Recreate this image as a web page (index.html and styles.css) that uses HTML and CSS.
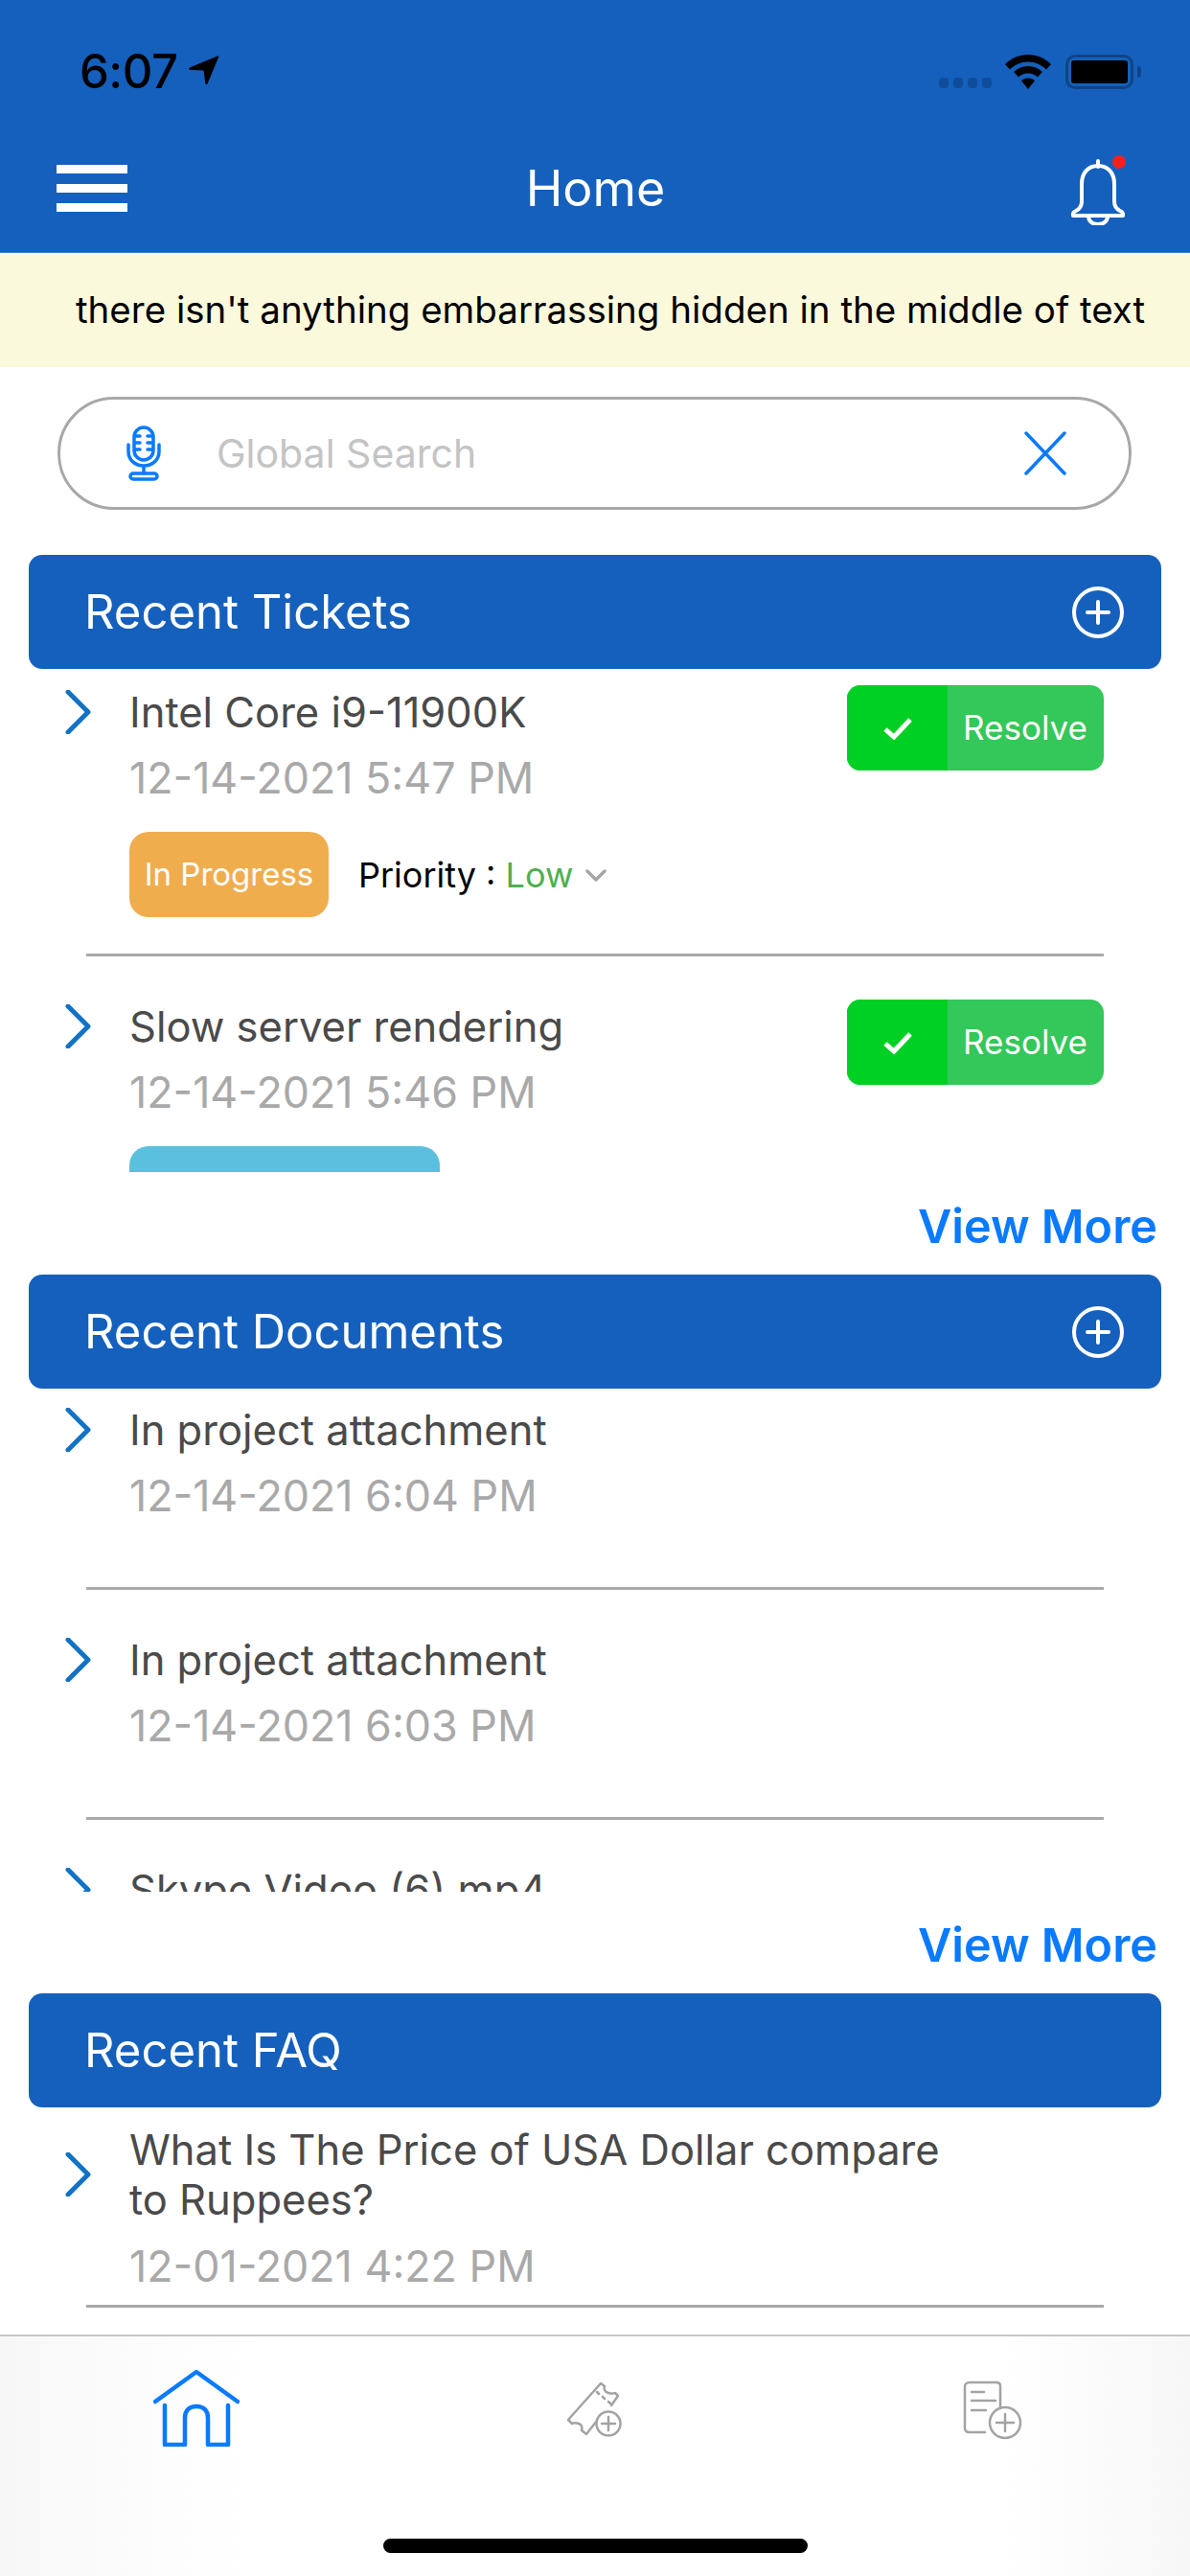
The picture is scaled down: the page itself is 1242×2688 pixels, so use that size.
FILE: index.html
```html
<!DOCTYPE html>
<html lang="en">
<head>
<meta charset="utf-8">
<title>Home</title>
<link rel="stylesheet" href="styles.css">
</head>
<body>
<div class="app">
  <header class="header">
    <div class="status">
      <div class="status-left">
        <span class="time">6:07</span>
        <svg class="arrow" viewBox="0 0 32 32"><path d="M1 13.500 30 1.500c1-.4 1.500.2 1.100 1.200L19.500 30.500c-.5 1.200-2 1-2.200-.3L15.500 16.500 1.500 16c-1.500-.1-1.800-1.800-.5-2.500z" fill="#000"/></svg>
      </div>
      <div class="status-right">
        <div class="dots"><i></i><i></i><i></i><i></i></div>
        <svg class="wifi" viewBox="0 0 48 36"><path d="M24 0C15 0 6.500 3.500 0 10l5 5.500C10 10.500 16.800 7.500 24 7.500s14 3 19 8l5-5.500C41.500 3.500 33 0 24 0z" fill="#000"/><path d="M24 12c-5.800 0-11 2.300-15 6l5 5.500c2.600-2.500 6.200-4 10-4s7.400 1.500 10 4l5-5.500c-4-3.700-9.200-6-15-6z" fill="#000"/><path d="M24 24.500c-2.700 0-5.200 1-7 2.700L24 36l7-8.800c-1.800-1.700-4.300-2.700-7-2.700z" fill="#000"/></svg>
        <div class="battery"><div class="battery-fill"></div></div>
        <div class="battery-nub"></div>
      </div>
    </div>
    <nav class="nav">
      <div class="burger"><i></i><i></i><i></i></div>
      <div class="nav-title">Home</div>
      <svg class="bell" viewBox="0 0 58 73"><path d="M29 6v6M29 11c-11 0-17 8-17 19v18c0 5-2 8-6 10-2 1-3 2-3 3v2h52v-2c0-1-1-2-3-3-4-2-6-5-6-10V30c0-11-6-19-17-19z" fill="none" stroke="#fff" stroke-width="4" stroke-linejoin="round" stroke-linecap="round"/><path d="M19 63c0 6 4 9 10 9s10-3 10-9" fill="none" stroke="#fff" stroke-width="4"/><circle cx="51" cy="7" r="7" fill="#f5201e"/></svg>
    </nav>
  </header>

  <div class="notice">there isn't anything embarrassing hidden in the middle of text</div>

  <div class="search">
    <svg class="mic" viewBox="0 0 36 58"><g fill="none" stroke="#0a7aff" stroke-width="3.500" stroke-linecap="round" stroke-linejoin="round"><rect x="8" y="2" width="20" height="34" rx="10"/><path d="M9 11h5M22 11h5M9 18h5M22 18h5M9 25h5M22 25h5"/><path d="M2 20v7c0 9 7 15 16 15s16-6 16-15v-7M18 42v8"/><rect x="4" y="50" width="28" height="6" rx="3"/></g></svg>
    <span class="placeholder">Global Search</span>
    <svg class="clear" viewBox="0 0 44 46"><path d="M2 2l40 42M42 2L2 44" fill="none" stroke="#0a7aff" stroke-width="3.500" stroke-linecap="round"/></svg>
  </div>

  <section class="bar">
    <h2 class="bar-title">Recent Tickets</h2>
    <svg class="plus" viewBox="0 0 54 54"><circle cx="27" cy="27" r="25" fill="none" stroke="#fff" stroke-width="4"/><path d="M16 27h22M27 16v22" stroke="#fff" stroke-width="4" stroke-linecap="round"/></svg>
  </section>
  <div class="list list-clip">
    <article class="item item-ticket">
      <svg class="chev" viewBox="0 0 28 46"><path d="M3 2l21 21L3 44" fill="none" stroke="#1272c4" stroke-width="5" stroke-linecap="round" stroke-linejoin="round"/></svg>
      <div class="body">
        <div class="title">Intel Core i9-11900K</div>
        <div class="date">12-14-2021 5:47 PM</div>
        <div class="meta">
          <span class="badge badge-orange">In Progress</span>
          <span class="priority">Priority : <span class="low">Low</span></span>
          <svg class="down" viewBox="0 0 22 14"><path d="M2 2l9 9 9-9" fill="none" stroke="#a6a6a6" stroke-width="3.500" stroke-linecap="round" stroke-linejoin="round"/></svg>
        </div>
      </div>
      <div class="resolve">
        <span class="resolve-icon"><svg class="check" viewBox="0 0 32 24"><path d="M3 13l9 8L29 3" fill="none" stroke="#fff" stroke-width="5"/></svg></span>
        <span class="resolve-text">Resolve</span>
      </div>
    </article>
    <article class="item item-ticket">
      <svg class="chev" viewBox="0 0 28 46"><path d="M3 2l21 21L3 44" fill="none" stroke="#1272c4" stroke-width="5" stroke-linecap="round" stroke-linejoin="round"/></svg>
      <div class="body">
        <div class="title">Slow server rendering</div>
        <div class="date">12-14-2021 5:46 PM</div>
        <div class="meta"><span class="badge badge-blue"></span></div>
      </div>
      <div class="resolve">
        <span class="resolve-icon"><svg class="check" viewBox="0 0 32 24"><path d="M3 13l9 8L29 3" fill="none" stroke="#fff" stroke-width="5"/></svg></span>
        <span class="resolve-text">Resolve</span>
      </div>
    </article>
  </div>
  <div class="more">View More</div>

  <section class="bar">
    <h2 class="bar-title">Recent Documents</h2>
    <svg class="plus" viewBox="0 0 54 54"><circle cx="27" cy="27" r="25" fill="none" stroke="#fff" stroke-width="4"/><path d="M16 27h22M27 16v22" stroke="#fff" stroke-width="4" stroke-linecap="round"/></svg>
  </section>
  <div class="list list-clip list-docs">
    <article class="item item-doc">
      <svg class="chev" viewBox="0 0 28 46"><path d="M3 2l21 21L3 44" fill="none" stroke="#1272c4" stroke-width="5" stroke-linecap="round" stroke-linejoin="round"/></svg>
      <div class="body">
        <div class="title">In project attachment</div>
        <div class="date">12-14-2021 6:04 PM</div>
      </div>
    </article>
    <article class="item item-doc">
      <svg class="chev" viewBox="0 0 28 46"><path d="M3 2l21 21L3 44" fill="none" stroke="#1272c4" stroke-width="5" stroke-linecap="round" stroke-linejoin="round"/></svg>
      <div class="body">
        <div class="title">In project attachment</div>
        <div class="date">12-14-2021 6:03 PM</div>
      </div>
    </article>
    <article class="item item-doc">
      <svg class="chev" viewBox="0 0 28 46"><path d="M3 2l21 21L3 44" fill="none" stroke="#1272c4" stroke-width="5" stroke-linecap="round" stroke-linejoin="round"/></svg>
      <div class="body">
        <div class="title">Skype Video (6).mp4</div>
      </div>
    </article>
  </div>
  <div class="more more-last">View More</div>

  <section class="bar">
    <h2 class="bar-title">Recent FAQ</h2>
  </section>
  <div class="list list-docs">
    <article class="item item-faq">
      <svg class="chev chev-faq" viewBox="0 0 28 46"><path d="M3 2l21 21L3 44" fill="none" stroke="#1272c4" stroke-width="5" stroke-linecap="round" stroke-linejoin="round"/></svg>
      <div class="body">
        <div class="title title-wrap">What Is The Price of USA Dollar compare to Ruppees?</div>
        <div class="date">12-01-2021 4:22 PM</div>
      </div>
    </article>
  </div>

  <footer class="tabbar">
    <div class="tabs">
      <svg class="tab-home" viewBox="0 0 90 80"><g fill="none" stroke="#0a7aff" stroke-width="4.500" stroke-linecap="round" stroke-linejoin="round"><path d="M2 33L45 2l43 31"/><path d="M12 37v41h21V50c0-8 5-12 12-12s12 4 12 12v28h21V37"/></g></svg>
      <svg class="tab-ticket" viewBox="0 0 58 58"><g fill="none" stroke="#a3a3a3" stroke-width="2.500" stroke-linecap="round" stroke-linejoin="round"><path d="M35 2l4 3c-1 3 0 6 4 7s5 1 7 0l3 3-7 10M31 41L20 55l-5-4c1-3 0-6-3-7s-5-1-7 0l-4-4L35 2"/><path d="M31 11l2 2M37 16l2 2M43 21l2 2"/><circle cx="43" cy="44" r="12.500"/><path d="M36 44h14M43 37v14"/></g></svg>
      <svg class="tab-doc" viewBox="0 0 62 62"><g fill="none" stroke="#a3a3a3" stroke-width="2.500" stroke-linecap="round" stroke-linejoin="round"><path d="M39 29V6c0-3-2-4-4-4H7C4 2 2 4 2 6v44c0 3 2 4 5 4h16"/><path d="M9 12h13M9 21h25M9 31h15"/><circle cx="44" cy="44" r="16"/><path d="M35 44h18M44 35v18"/></g></svg>
    </div>
    <div class="home-indicator"></div>
  </footer>
</div>
</body>
</html>
```
FILE: styles.css
```css
* { box-sizing: border-box; }
html, body { margin: 0; padding: 0; background: #fff; }
.app {
  width: 1242px;
  height: 2688px;
  display: flex;
  flex-direction: column;
  overflow: hidden;
  font-family: Inter, "Liberation Sans", sans-serif;
  background: #fff;
}
.header {
  height: 264px;
  flex: none;
  background: #1560bd;
  padding-top: 50px;
  border-bottom: 1px solid #3d7fd0;
}
.status {
  height: 50px;
  display: flex;
  justify-content: space-between;
  align-items: center;
  padding: 0 51px 0 83px;
}
.status-left { display: flex; align-items: center; gap: 12px; }
.time { font-size: 49px; font-weight: 500; color: #000; line-height: 50px; letter-spacing: -0.5px; }
.arrow { width: 32px; height: 32px; margin-top: -5px; display: block; }
.status-right { display: flex; align-items: center; }
.dots { display: flex; gap: 5px; margin: 23px 14px 0 0; }
.dots i { width: 10px; height: 11px; border-radius: 4px; background: #0f4c99; display: block; }
.wifi { width: 48px; height: 36px; display: block; margin-right: 15px; }
.battery {
  width: 71px;
  height: 36px;
  border: 3px solid #0f4485;
  border-radius: 10px;
  padding: 3px;
}
.battery-fill { width: 100%; height: 100%; background: #000; border-radius: 3px; }
.battery-nub { width: 4px; height: 12px; background: #0f4485; border-radius: 0 4px 4px 0; margin-left: 4px; }
.nav {
  height: 163px;
  padding: 30px 67px 0 59px;
  display: grid;
  grid-template-columns: 1fr auto 1fr;
  align-items: center;
}
.burger { width: 74px; display: flex; flex-direction: column; gap: 11px; margin-top: -1px; }
.burger i { display: block; height: 9px; background: #fff; }
.nav-title { font-size: 52px; color: #fff; font-weight: 400; line-height: 60px; margin-left: 9px; }
.bell { width: 58px; height: 73px; display: block; margin-top: 3px; justify-self: end; }
.notice {
  height: 119px;
  flex: none;
  background: #faf9dc;
  color: #000;
  font-size: 38.500px;
  line-height: 119px;
  padding-left: 79px;
  white-space: nowrap;
}
.search {
  flex: none;
  height: 118px;
  margin: 31px 61px 47px 60px;
  border: 3px solid #a8a8a8;
  border-radius: 59px;
  display: flex;
  align-items: center;
  padding: 0 65px 0 69px;
}
.mic { width: 36px; height: 58px; display: block; flex: none; }
.placeholder { font-size: 41px; color: #c4c4c4; margin-left: 58px; flex: 1; }
.clear { width: 44px; height: 46px; display: block; flex: none; }
.bar {
  flex: none;
  height: 119px;
  margin: 0 30px;
  background: #1560bd;
  border-radius: 14px;
  display: flex;
  align-items: center;
  justify-content: space-between;
  padding: 0 39px 0 58px;
}
.bar-title { margin: 0; font-size: 49px; font-weight: 400; color: #fff; line-height: 60px; }
.plus { width: 54px; height: 54px; display: block; }
.list { padding: 20px 0 0 68px; flex: none; }
.list-docs { padding-top: 18px; }
.list-clip { height: 525px; overflow: hidden; }
.item {
  display: flex;
  width: 1084px;
  margin-bottom: 48px;
  position: relative;
}
.item-ticket { padding-bottom: 41px; }
.item-doc { padding-bottom: 73px; }
.item-faq { padding-bottom: 18px; margin-bottom: 0; }
.item::after {
  content: "";
  position: absolute;
  left: 22px;
  right: 0;
  bottom: 0;
  height: 3px;
  background: #a9a9a9;
}
.chev { width: 28px; height: 46px; flex: none; margin: 2px 39px 0 0; display: block; }
.chev-faq { margin-top: 29px; }
.body { flex: 1; min-width: 0; }
.title { font-size: 43.500px; color: #4a4a4a; line-height: 50px; }
.title-wrap { max-width: 880px; line-height: 52px; }
.date { font-size: 44.800px; color: #a9a9a9; line-height: 50px; margin-top: 19px; }
.meta { display: flex; align-items: center; margin-top: 31px; height: 89px; }
.badge {
  height: 89px;
  border-radius: 20px;
  color: #fff;
  font-size: 33px;
  line-height: 89px;
  text-align: center;
  flex: none;
}
.badge-orange { width: 208px; background: #f0ad4e; }
.badge-blue { width: 324px; background: #5bc0de; }
.priority { font-size: 36px; color: #000; margin-left: 31px; }
.low { color: #4caf50; }
.down { width: 22px; height: 14px; margin: 2px 0 0 13px; display: block; }
.resolve {
  flex: none;
  width: 268px;
  height: 89px;
  margin-top: -3px;
  border-radius: 14px;
  overflow: hidden;
  display: flex;
  background: #34c759;
}
.resolve-icon {
  width: 105px;
  background: #00d024;
  display: flex;
  align-items: center;
  justify-content: center;
}
.check { width: 32px; height: 24px; display: block; }
.resolve-text { color: #fff; font-size: 35px; line-height: 89px; margin-left: 16px; }
.more {
  flex: none;
  height: 107px;
  text-align: right;
  padding: 32px 34px 0 0;
  font-size: 48.500px;
  line-height: 50px;
  font-weight: 600;
  color: #0a7aff;
}
.more-last { height: 106px; padding-top: 31px; }
.tabbar {
  margin-top: auto;
  flex: none;
  height: 252px;
  border-top: 2px solid #c6c6c6;
  background: linear-gradient(90deg, #f7f7f7 0, #fdfdfd 14%, #fff 22%, #fff 84%, #f7f7f7 100%);
  position: relative;
}
.tabs {
  display: flex;
  align-items: flex-start;
  padding-left: 160px;
}
.tab-home { width: 90px; height: 80px; margin-top: 35px; display: block; }
.tab-ticket { width: 58px; height: 58px; margin: 47px 0 0 342px; display: block; }
.tab-doc { width: 62px; height: 62px; margin: 46px 0 0 355px; display: block; }
.home-indicator {
  position: absolute;
  left: 400px;
  bottom: 24px;
  width: 443px;
  height: 15px;
  border-radius: 8px;
  background: #000;
}
```
